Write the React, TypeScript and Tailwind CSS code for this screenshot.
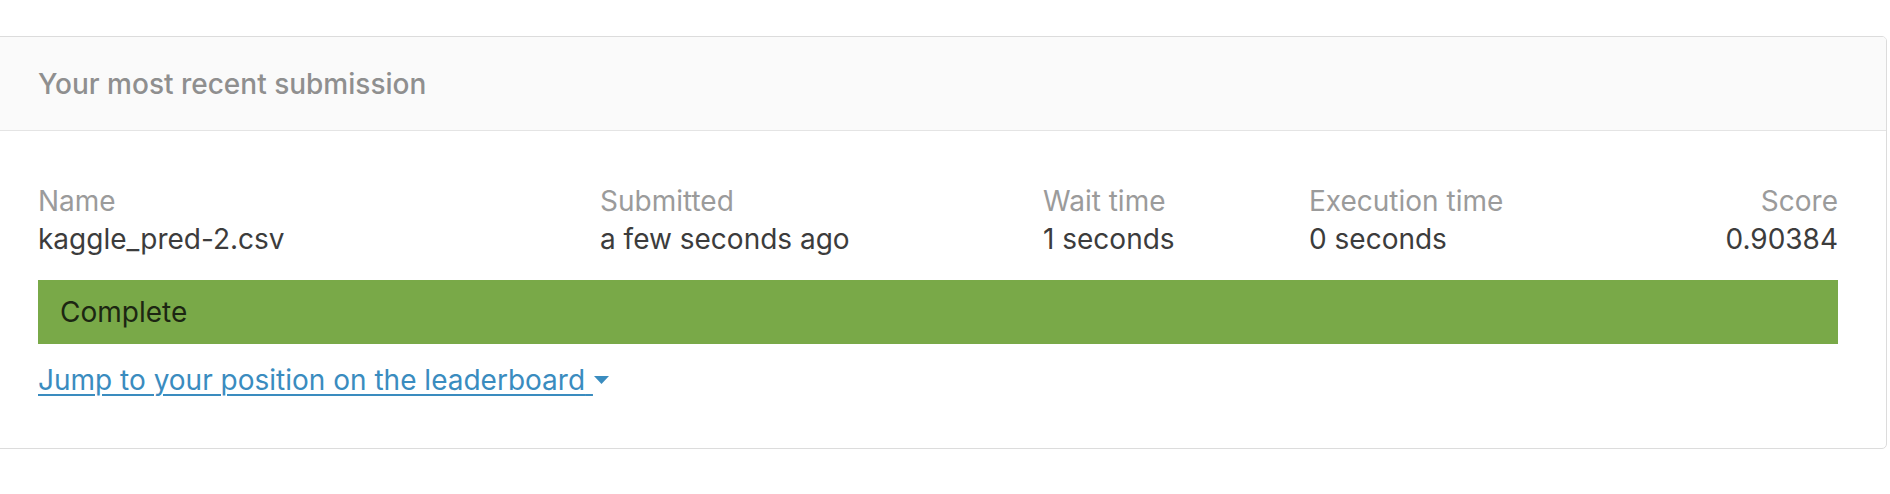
import React from "react";

const cols = [
  { label: "Name", value: "kaggle_pred-2.csv" },
  { label: "Submitted", value: "a few seconds ago" },
  { label: "Wait time", value: "1 seconds" },
  { label: "Execution time", value: "0 seconds" },
];

export default function App() {
  return (
    <div className="w-[1890px] h-[494px] bg-white overflow-hidden pt-[36px] font-['Inter','Liberation_Sans',sans-serif]">
      <div className="ml-[-9px] w-[1896px] border border-[#dcdcdc] rounded-[5px] bg-white overflow-hidden">
        <div className="h-[94px] bg-[#fafafa] border-b border-[#e4e4e4] flex items-center pl-[46px] pr-[48px]">
          <span className="text-[28px] leading-[34px] text-[#8f8f8f] font-medium">Your most recent submission</span>
        </div>
        <div className="pl-[46px] pr-[48px] pt-[51px] pb-[49px]">
          <div className="grid grid-cols-[562px_443px_266px_1fr_auto]">
            {cols.map((c) => (
              <div key={c.label} className="flex flex-col">
                <span className="text-[28px] leading-[38px] text-[#9b9b9b]">{c.label}</span>
                <span className="text-[28px] leading-[38px] text-[#3c3c3c]">{c.value}</span>
              </div>
            ))}
            <div className="flex flex-col items-end">
              <span className="text-[28px] leading-[38px] text-[#9b9b9b]">Score</span>
              <span className="text-[28px] leading-[38px] text-[#3c3c3c]">0.90384</span>
            </div>
          </div>
          <div className="mt-[22px] h-[64px] bg-[#79a948] flex items-center pl-[22px]">
            <span className="text-[28px] leading-[34px] text-[#1c2612]">Complete</span>
          </div>
          <div className="mt-[17px] flex items-center">
            <a href="#" className="text-[28px] leading-[38px] text-[#3a8cbf] underline underline-offset-[4px] decoration-[2px]">
              Jump to your position on the leaderboard{"\u00a0"}
            </a>
            <svg width="15" height="8" viewBox="0 0 15 8" className="ml-[1px]">
              <path d="M0 0 L15 0 L7.5 8 Z" fill="#3a8cbf" />
            </svg>
          </div>
        </div>
      </div>
    </div>
  );
}
